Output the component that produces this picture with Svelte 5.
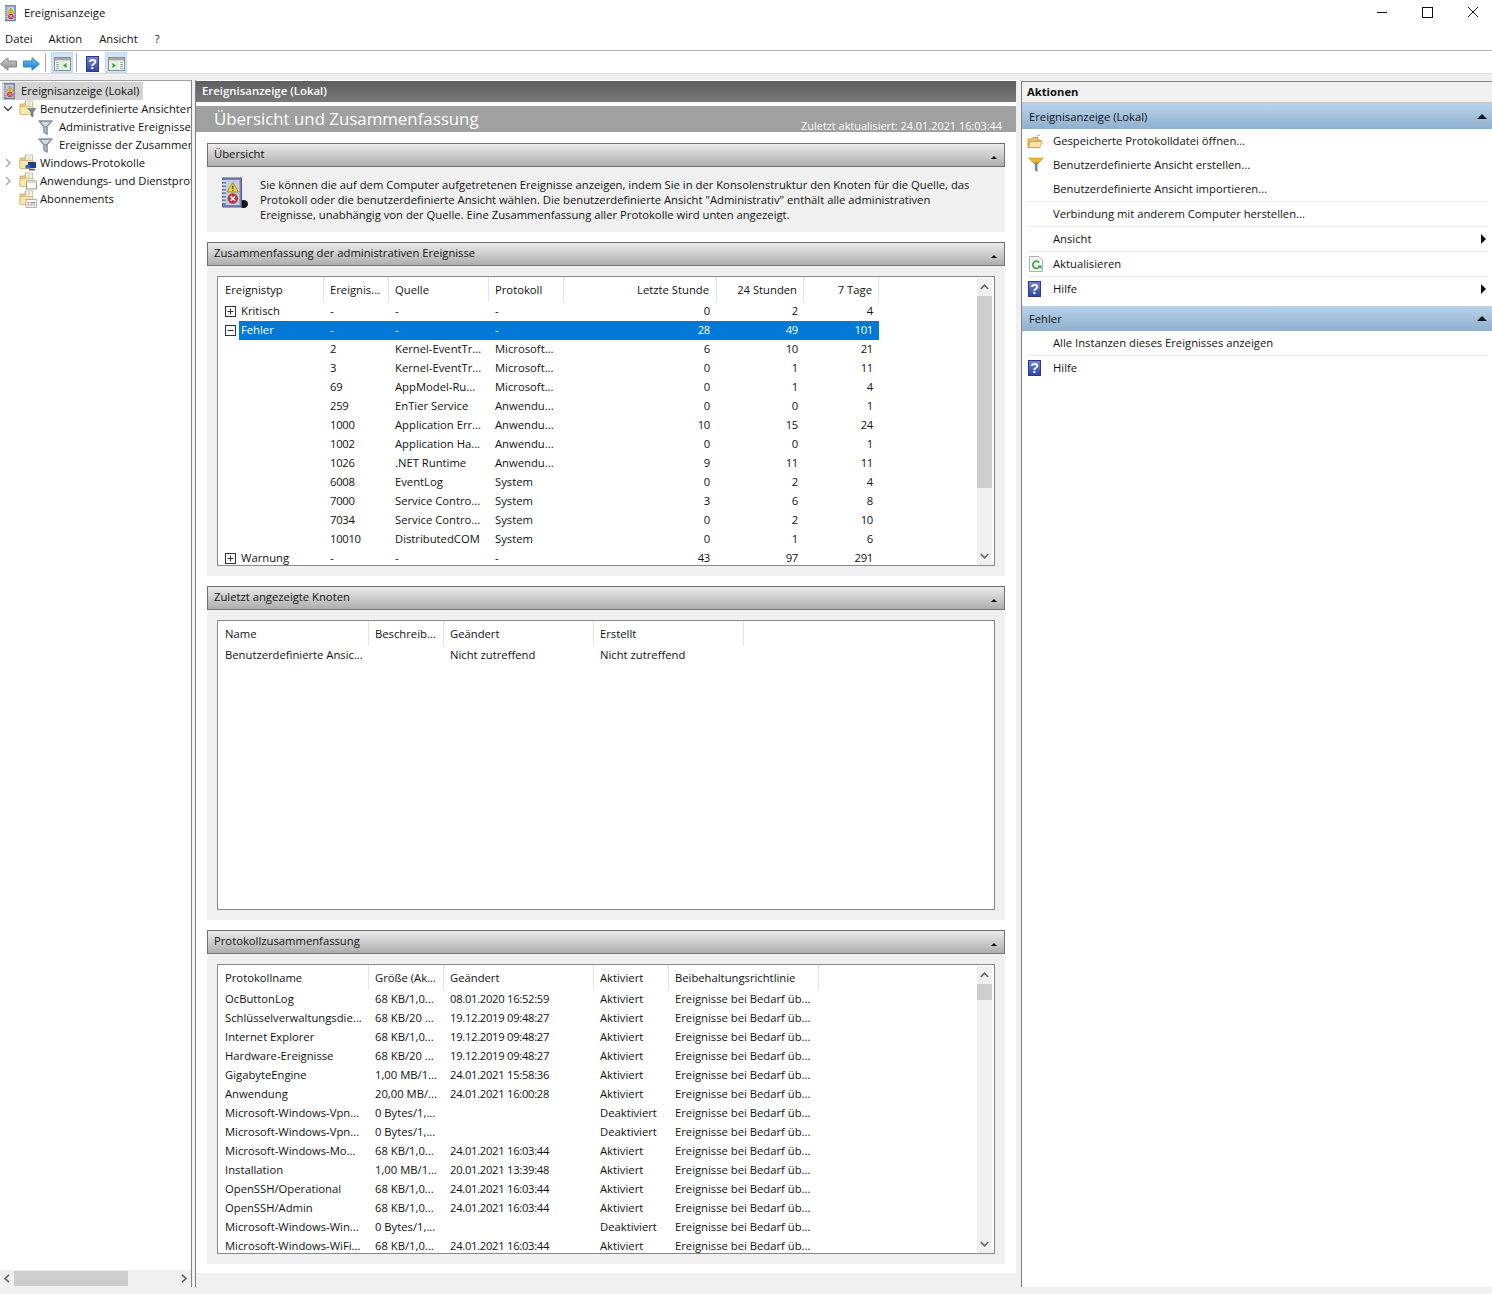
<script>
  const col1 = [
    { w: 106, t: 'Ereignistyp' }, { w: 65, t: 'Ereignis...' }, { w: 100, t: 'Quelle' }, { w: 75, t: 'Protokoll' },
    { w: 153, t: 'Letzte Stunde', r: 7 }, { w: 87, t: '24 Stunden', r: 6 }, { w: 75, t: '7 Tage', r: 6 }
  ];
  const rows1 = [
    { tog: '+', c: ['Kritisch', '-', '-', '-', '0', '2', '4'] },
    { tog: '-', sel: true, c: ['Fehler', '-', '-', '-', '28', '49', '101'] },
    { c: ['', '2', 'Kernel-EventTr...', 'Microsoft...', '6', '10', '21'] },
    { c: ['', '3', 'Kernel-EventTr...', 'Microsoft...', '0', '1', '11'] },
    { c: ['', '69', 'AppModel-Ru...', 'Microsoft...', '0', '1', '4'] },
    { c: ['', '259', 'EnTier Service', 'Anwendu...', '0', '0', '1'] },
    { c: ['', '1000', 'Application Err...', 'Anwendu...', '10', '15', '24'] },
    { c: ['', '1002', 'Application Ha...', 'Anwendu...', '0', '0', '1'] },
    { c: ['', '1026', '.NET Runtime', 'Anwendu...', '9', '11', '11'] },
    { c: ['', '6008', 'EventLog', 'System', '0', '2', '4'] },
    { c: ['', '7000', 'Service Contro...', 'System', '3', '6', '8'] },
    { c: ['', '7034', 'Service Contro...', 'System', '0', '2', '10'] },
    { c: ['', '10010', 'DistributedCOM', 'System', '0', '1', '6'] },
    { tog: '+', c: ['Warnung', '-', '-', '-', '43', '97', '291'] }
  ];
  const col2 = [{ w: 151, t: 'Name' }, { w: 75, t: 'Beschreib...' }, { w: 150, t: 'Geändert' }, { w: 150, t: 'Erstellt' }];
  const rows2 = [{ c: ['Benutzerdefinierte Ansic...', '', 'Nicht zutreffend', 'Nicht zutreffend'] }];
  const col3 = [{ w: 151, t: 'Protokollname' }, { w: 75, t: 'Größe (Ak...' }, { w: 150, t: 'Geändert' }, { w: 75, t: 'Aktiviert' }, { w: 150, t: 'Beibehaltungsrichtlinie' }];
  const pol = 'Ereignisse bei Bedarf üb...';
  const rows3 = [
    ['OcButtonLog', '68 KB/1,0...', '08.01.2020 16:52:59', 'Aktiviert'],
    ['Schlüsselverwaltungsdie...', '68 KB/20 ...', '19.12.2019 09:48:27', 'Aktiviert'],
    ['Internet Explorer', '68 KB/1,0...', '19.12.2019 09:48:27', 'Aktiviert'],
    ['Hardware-Ereignisse', '68 KB/20 ...', '19.12.2019 09:48:27', 'Aktiviert'],
    ['GigabyteEngine', '1,00 MB/1...', '24.01.2021 15:58:36', 'Aktiviert'],
    ['Anwendung', '20,00 MB/...', '24.01.2021 16:00:28', 'Aktiviert'],
    ['Microsoft-Windows-Vpn...', '0 Bytes/1,...', '', 'Deaktiviert'],
    ['Microsoft-Windows-Vpn...', '0 Bytes/1,...', '', 'Deaktiviert'],
    ['Microsoft-Windows-Mo...', '68 KB/1,0...', '24.01.2021 16:03:44', 'Aktiviert'],
    ['Installation', '1,00 MB/1...', '20.01.2021 13:39:48', 'Aktiviert'],
    ['OpenSSH/Operational', '68 KB/1,0...', '24.01.2021 16:03:44', 'Aktiviert'],
    ['OpenSSH/Admin', '68 KB/1,0...', '24.01.2021 16:03:44', 'Aktiviert'],
    ['Microsoft-Windows-Win...', '0 Bytes/1,...', '', 'Deaktiviert'],
    ['Microsoft-Windows-WiFi...', '68 KB/1,0...', '24.01.2021 16:03:44', 'Aktiviert']
  ].map((c) => ({ c: [...c, pol] }));
  const isNum = (v) => /^[\d.]+( [\d:]+)?$/.test(v);
</script>

{#snippet book(w, h, blob)}
  <svg width={w} height={h} viewBox="0 0 28 32">
    {#if blob}<ellipse cx="23.5" cy="27" rx="4.5" ry="4" fill="#111" />{/if}
    <rect x="2.5" y="1" width="19" height="29" fill="#7488b4" stroke="#4c5e86" />
    <rect x="6" y="3" width="13.5" height="25" fill="#c2cee3" />
    <path d="M1 4h5M1 7.5h5M1 11h5M1 14.5h5M1 18h5M1 21.5h5M1 25h5" stroke="#e8ecf2" stroke-width="1.3" />
    <path d="M12.8 5.5 L18.5 15 H7 Z" fill="#f4cf3a" stroke="#a88a18" />
    <path d="M12.8 8.5v3.5M12.8 12.8v1.2" stroke="#5a4a10" stroke-width="1.2" />
    <circle cx="12.8" cy="21.5" r="5.2" fill="#c8303c" />
    <path d="M10.5 19.2 l4.6 4.6 m0 -4.6 l-4.6 4.6" stroke="#fff" stroke-width="1.6" />
  </svg>
{/snippet}

{#snippet folder(kind)}
  <svg width="18" height="18" viewBox="0 0 18 18">
    <path d="M1 4 H5 L6.5 2 H8 V14 H1 Z" fill="#e9c97c" stroke="#c6a45c" stroke-width=".7" />
    <rect x="6.5" y="1" width="7" height="7" fill="#fdfbf2" stroke="#b8a880" stroke-width=".7" />
    <path d="M8 3h4M8 5h4" stroke="#c8b890" stroke-width=".7" />
    <path d="M1 6.5 H14 V14.5 H1 Z" fill="#fae7ac" stroke="#d0b066" stroke-width=".7" />
    {#if kind === 'filter'}
      <path d="M8.5 8.5 H17 L14 12 V17 L12 15.8 V12 Z" fill="#74899b" stroke="#4e5f6e" stroke-width=".5" />
    {:else if kind === 'win'}
      <rect x="9" y="8" width="8" height="6" fill="#1c3f94" />
      <rect x="6.5" y="11" width="5" height="3.5" fill="#2c62c8" />
      <rect x="10" y="15" width="6" height="1.4" fill="#555" />
    {:else if kind === 'app'}
      <rect x="7.5" y="9" width="10" height="8" fill="#f8f8f4" stroke="#80808a" stroke-width=".8" />
      <rect x="7.5" y="9" width="10" height="2" fill="#d8d8d0" />
    {:else}
      <rect x="7" y="9.5" width="10.5" height="8" fill="#fff" stroke="#8a94a8" stroke-width=".7" />
      <path d="M8.5 15h2M11.5 15h2M14.5 15h1.5M8.5 12.8h2" stroke="#c04040" stroke-width="1" />
      <path d="M11.5 12.8h4.5" stroke="#4060b0" stroke-width="1" />
    {/if}
  </svg>
{/snippet}

{#snippet funnel()}
  <svg width="15" height="15" viewBox="0 0 15 15">
    <path d="M.5 .8 H14.5 L9.3 6.8 V14.5 L5.7 12.3 V6.8 Z" fill="#8b9cab" stroke="#66798a" stroke-width=".7" />
    <path d="M3 2 H12 L8.5 6 H6.5 Z" fill="#d5dee6" />
    <path d="M6.7 7.5 V12 L8.2 13 V7.5 Z" fill="#b9c6d0" />
  </svg>
{/snippet}

{#snippet help()}
  <svg width="13" height="16" viewBox="0 0 13 16">
    <defs><linearGradient id="hb" x1="0" y1="0" x2="0" y2="1"><stop offset="0" stop-color="#7286d4" /><stop offset="1" stop-color="#2c46a4" /></linearGradient></defs>
    <rect x=".5" y=".5" width="12" height="15" fill="url(#hb)" stroke="#2a3a82" />
    <text x="6.5" y="13.2" text-anchor="middle" class="q">?</text>
  </svg>
{/snippet}

{#snippet paneicon(side)}
  <svg width="17" height="14" viewBox="0 0 17 14">
    <rect x=".5" y=".5" width="16" height="13" fill="#fbfbfb" stroke="#8c8c8c" />
    <rect x="1" y="1" width="15" height="2.5" fill="#a8a8a8" />
    {#if side === 'l'}
      <path d="M2 5.5h3M2 7.5h3M2 9.5h3M2 11.5h3" stroke="#8aa" />
      <rect x="6" y="4" width="9.5" height="9" fill="#e2f1e2" />
      <path d="M12.5 6 L9 8.5 L12.5 11 Z" fill="#2f9e44" />
    {:else}
      <rect x="1.5" y="4" width="9.5" height="9" fill="#e2f1e2" />
      <path d="M4.5 6 L8 8.5 L4.5 11 Z" fill="#2f9e44" />
      <path d="M12 5.5h3M12 7.5h3M12 9.5h3M12 11.5h3" stroke="#8aa" />
    {/if}
  </svg>
{/snippet}

{#snippet chevron(up)}
  <svg width="9" height="6" viewBox="0 0 9 6"><path d={up ? 'M.8 5 L4.5 1.2 L8.2 5' : 'M.8 1 L4.5 4.8 L8.2 1'} fill="none" stroke="#606060" stroke-width="1.6" /></svg>
{/snippet}

{#snippet sechead(title)}
  <div class="sechead"><span>{title}</span><i class="tri"></i></div>
{/snippet}

{#snippet listview(cols, rows, thumb, thumbH)}
  <div class="list">
    <div class="table">
      <div class="thead">
        {#each cols as c}
          <div class="th" class:r={c.r} style="width:{c.w}px;padding-right:{c.r ?? 5}px">{c.t}</div>
        {/each}
      </div>
      {#each rows as row}
        <div class="tr">
          {#each row.c as v, i}
            <div class="td" class:r={cols[i].r} class:num={isNum(v)} class:sel={row.sel} class:first={i === 0 && row.tog} style="width:{cols[i].w}px;padding-right:{cols[i].r ?? 5}px">
              {#if i === 0 && row.tog}
                <span class="tog">
                  <svg width="11" height="11" viewBox="0 0 11 11"><rect x=".5" y=".5" width="10" height="10" fill="#fff" stroke="#333" /><path d={row.tog === '+' ? 'M2.5 5.5h6M5.5 2.5v6' : 'M2.5 5.5h6'} stroke="#333" /></svg>
                </span>
                <span class="lab">{v}</span>
              {:else}
                {v}
              {/if}
            </div>
          {/each}
        </div>
      {/each}
    </div>
    {#if thumb}
      <div class="vbar">
        <div class="arrow">{@render chevron(true)}</div>
        <div class="track"><div class="thumb" style="height:{thumbH}px"></div></div>
        <div class="arrow">{@render chevron(false)}</div>
      </div>
    {/if}
  </div>
{/snippet}

<div class="app">
  <header class="title">
    <span class="appicon">{@render book(15, 17, false)}</span>
    <span class="tname">Ereignisanzeige</span>
    <div class="winbtns">
      <svg width="12" height="12" viewBox="0 0 12 12"><path d="M0 5.5h10" stroke="#111" /></svg>
      <svg width="12" height="12" viewBox="0 0 12 12"><rect x=".5" y=".5" width="10" height="10" fill="none" stroke="#111" /></svg>
      <svg width="12" height="12" viewBox="0 0 12 12"><path d="M1 0l10 10M11 0L1 10" stroke="#111" /></svg>
    </div>
  </header>
  <nav class="menu"><span>Datei</span><span>Aktion</span><span>Ansicht</span><span>?</span></nav>
  <div class="toolbar">
    <svg class="arr" width="17" height="14" viewBox="0 0 17 14">
      <defs><linearGradient id="ga" x1="0" y1="0" x2="0" y2="1"><stop offset="0" stop-color="#cfcfcf" /><stop offset="1" stop-color="#8c8c8c" /></linearGradient></defs>
      <path d="M.5 7 L8 .8 V4 H16.5 V10 H8 V13.2 Z" fill="url(#ga)" stroke="#8a8a8a" />
    </svg>
    <svg class="arr2" width="17" height="14" viewBox="0 0 17 14">
      <defs><linearGradient id="gb" x1="0" y1="0" x2="0" y2="1"><stop offset="0" stop-color="#6cc0f0" /><stop offset="1" stop-color="#1c7ccb" /></linearGradient></defs>
      <path d="M16.5 7 L9 .8 V4 H.5 V10 H9 V13.2 Z" fill="url(#gb)" stroke="#2a88cc" />
    </svg>
    <i class="sep"></i>
    <span class="tb on">{@render paneicon('l')}</span>
    <i class="sep s2"></i>
    <span class="tb">{@render help()}</span>
    <span class="tb on t3">{@render paneicon('r')}</span>
  </div>

  <main class="main">
    <aside class="tree">
      <div class="treelist">
        <div class="node n0"><span class="selbg"><span class="ico">{@render book(15, 17, false)}</span><span>Ereignisanzeige (Lokal)</span></span></div>
        <div class="node n1"><svg class="exp" width="10" height="8" viewBox="0 0 10 8"><path d="M1 1.5 L5 5.5 L9 1.5" fill="none" stroke="#444" stroke-width="1.4" /></svg><span class="ico">{@render folder('filter')}</span><span>Benutzerdefinierte Ansichten</span></div>
        <div class="node n2"><span class="ico">{@render funnel()}</span><span>Administrative Ereignisse</span></div>
        <div class="node n2"><span class="ico">{@render funnel()}</span><span>Ereignisse der Zusammenfassung</span></div>
        <div class="node n1"><svg class="exp" width="10" height="10" viewBox="0 0 10 10"><path d="M3 1 L7 5 L3 9" fill="none" stroke="#a6a6a6" stroke-width="1.4" /></svg><span class="ico">{@render folder('win')}</span><span>Windows-Protokolle</span></div>
        <div class="node n1"><svg class="exp" width="10" height="10" viewBox="0 0 10 10"><path d="M3 1 L7 5 L3 9" fill="none" stroke="#a6a6a6" stroke-width="1.4" /></svg><span class="ico">{@render folder('app')}</span><span>Anwendungs- und Dienstprotokolle</span></div>
        <div class="node n1 noexp"><span class="ico">{@render folder('sub')}</span><span>Abonnements</span></div>
      </div>
      <div class="hbar">
        <svg width="8" height="9" viewBox="0 0 8 9"><path d="M6 .8 L2 4.5 L6 8.2" fill="none" stroke="#606060" stroke-width="1.6" /></svg>
        <div class="htrack"><div class="hthumb"></div></div>
        <svg width="8" height="9" viewBox="0 0 8 9"><path d="M2 .8 L6 4.5 L2 8.2" fill="none" stroke="#606060" stroke-width="1.6" /></svg>
      </div>
    </aside>

    <section class="center">
      <div class="chead"><span>Ereignisanzeige (Lokal)</span></div>
      <div class="band"><span class="bandt">Übersicht und Zusammenfassung</span><span class="bands">Zuletzt aktualisiert: 24.01.2021 16:03:44</span></div>
      <div class="scroll">
        <div class="sec">
          {@render sechead('Übersicht')}
          <div class="overview">
            <span class="ovicon">{@render book(28, 32, true)}</span>
            <p>
              <span>Sie können die auf dem Computer aufgetretenen Ereignisse anzeigen, indem Sie in der Konsolenstruktur den Knoten für die Quelle, das</span>
              <span>Protokoll oder die benutzerdefinierte Ansicht wählen. Die benutzerdefinierte Ansicht "Administrativ" enthält alle administrativen</span>
              <span>Ereignisse, unabhängig von der Quelle. Eine Zusammenfassung aller Protokolle wird unten angezeigt.</span>
            </p>
          </div>
        </div>
        <div class="sec">
          {@render sechead('Zusammenfassung der administrativen Ereignisse')}
          <div class="secbody">{@render listview(col1, rows1, true, 192)}</div>
        </div>
        <div class="sec">
          {@render sechead('Zuletzt angezeigte Knoten')}
          <div class="secbody">{@render listview(col2, rows2, false, 0)}</div>
        </div>
        <div class="sec">
          {@render sechead('Protokollzusammenfassung')}
          <div class="secbody">{@render listview(col3, rows3, true, 16)}</div>
        </div>
      </div>
      <div class="cfoot"></div>
    </section>

    <aside class="actions">
      <div class="ahead">Aktionen</div>
      <div class="agroup"><span>Ereignisanzeige (Lokal)</span><i class="atri"></i></div>
      <div class="item plain"><span class="aicon">
        <svg width="16" height="15" viewBox="0 0 16 15"><path d="M10 2 l3 -1" stroke="#9ab" /><path d="M1 13.5 V5 H5 L6 3.5 H11 V6.5 H14 L12.5 13.5 Z" fill="#e6c06a" stroke="#b9923c" stroke-width=".8" /><path d="M1.2 13.5 L3.5 7.5 H15.3 L12.8 13.5 Z" fill="#f8e3a0" stroke="#b9923c" stroke-width=".6" /></svg>
      </span>Gespeicherte Protokolldatei öffnen...</div>
      <div class="item plain"><span class="aicon">
        <svg class="mv" width="16" height="16" viewBox="0 0 16 16"><path d="M.5 1 H15.5 L9.5 7.5 V15 L7 13.5 V7.5 Z" fill="#6f8d9c" /><path d="M.5 1 H15.5 L11 5.5 H5 Z" fill="#f0b428" stroke="#c98a10" stroke-width=".5" /></svg>
      </span>Benutzerdefinierte Ansicht erstellen...</div>
      <div class="item"><span class="aicon"></span>Benutzerdefinierte Ansicht importieren...</div>
      <div class="item"><span class="aicon"></span>Verbindung mit anderem Computer herstellen...</div>
      <div class="item"><span class="aicon"></span>Ansicht<i class="rtri"></i></div>
      <div class="item"><span class="aicon">
        <svg class="mv2" width="14" height="16" viewBox="0 0 14 16"><path d="M.5 .5 H10 L13.5 4 V15.5 H.5 Z" fill="#f6f6f6" stroke="#b0b0b0" /><path d="M10.2 6.6 A3.6 3.6 0 1 0 10.6 10.4" fill="none" stroke="#3fae4a" stroke-width="1.8" /><path d="M8.5 9.5 H12.5 V13 Z" fill="#2f9e44" /></svg>
      </span>Aktualisieren</div>
      <div class="item plain"><span class="aicon mv">{@render help()}</span>Hilfe<i class="rtri"></i></div>
      <div class="agroup g2"><span>Fehler</span><i class="atri"></i></div>
      <div class="item"><span class="aicon"></span>Alle Instanzen dieses Ereignisses anzeigen</div>
      <div class="item plain"><span class="aicon mv">{@render help()}</span>Hilfe</div>
    </aside>
  </main>
</div>

<style>
  :global(body) { margin: 0; background: #f0f0f0; }
  .app {
    width: 1492px; height: 1294px; overflow: hidden; display: flex; flex-direction: column;
    font: 11.25px/16px "Open Sans", "Noto Sans", sans-serif; color: #111; background: #f0f0f0;
  }
  svg { display: block; flex: none; }
  .q { font: bold 14px "Liberation Sans", sans-serif; fill: #fff; }

  .title { height: 26px; background: #fff; display: flex; align-items: center; padding-left: 4px; }
  .appicon { width: 20px; flex: none; }
  .tname { flex: 1; }
  .winbtns { display: flex; gap: 33px; padding-right: 13px; }
  .menu { height: 23px; padding-top: 1px; background: #fff; display: flex; padding-left: 5px; gap: 16px; align-items: center; border-bottom: 1px solid #b4b4b4; box-sizing: content-box; }
  .menu span:nth-child(3), .menu span:nth-child(4) { margin-left: 1px; }
  .toolbar { height: 22px; background: #fff; display: flex; align-items: flex-start; padding-top: 0; border-bottom: 1px solid #dcdcdc; }
  .arr { margin-left: 0; margin-top: 6px; }
  .arr2 { margin-left: 6px; margin-top: 6px; }
  .sep { width: 1px; height: 19px; background: #a8a8a8; margin: 2px 5px 0; flex: none; }
  .s2 { margin: 2px 4px 0 3px; }
  .tb { width: 22px; height: 21px; margin-top: 1px; display: flex; align-items: center; justify-content: center; flex: none; box-sizing: border-box; padding-top: 2px; }
  .tb.on { background: #cfe4f7; border: 1px solid #bedcf4; }
  .t3 { margin-left: 2px; }

  .main { flex: 1; display: flex; margin-top: 6px; min-height: 0; margin-bottom: 7px; }
  .tree { width: 191px; flex: none; background: #fff; border-top: 1px solid #a0a0a0; border-right: 1px solid #808080; display: flex; flex-direction: column; }
  .treelist { flex: 1; padding-top: 1px; overflow: hidden; }
  .node { height: 18px; display: flex; align-items: center; white-space: nowrap; overflow: hidden; }
  .ico { flex: none; display: block; }
  .n0 { padding-left: 2px; }
  .selbg { display: flex; align-items: center; height: 18px; background: #d4d4d4; padding-right: 4px; flex: none; }
  .n0 .ico { width: 19px; padding-left: 1px; box-sizing: border-box; }
  .n1 { padding-left: 3px; }
  .n1 .exp { width: 10px; margin-right: 6px; }
  .n1 .ico { width: 21px; }
  .noexp { padding-left: 19px; }
  .n2 { padding-left: 38px; }
  .n2 .ico { width: 21px; }
  .hbar { height: 17px; background: #f0f0f0; display: flex; align-items: center; padding: 0 3px; gap: 3px; }
  .htrack { flex: 1; height: 15px; }
  .hthumb { width: 114px; height: 15px; background: #cdcdcd; }

  .center { width: 820px; margin-left: 3px; flex: none; background: #fff; border-left: 1px solid #808080; display: flex; flex-direction: column; padding-top: 1px; }
  .chead { height: 21px; background: linear-gradient(#5e5e5e, #7a7a7a); color: #fff; font-weight: 600; font-size: 11.4px; padding: 0 0 2px 6px; box-sizing: border-box; display: flex; align-items: center; flex: none; }
  .band { height: 26px; margin-top: 4px; background: #a0a0a0; color: #fff; display: flex; justify-content: space-between; align-items: flex-end; padding: 0 14px 0 18px; flex: none; }
  .bandt { font-size: 16.85px; line-height: 26px; }
  .bands { font-size: 10.9px; line-height: 14px; margin-bottom: -1px; }
  .scroll { flex: 1; padding: 11px 11px 9px 11px; display: flex; flex-direction: column; gap: 10px; background: #fff; }
  .sechead { height: 22px; border: 1px solid #707070; background: linear-gradient(#ececec, #adadad); display: flex; align-items: center; justify-content: space-between; padding: 0 6px 2px; box-sizing: content-box; }
  .sechead { height: 20px; }
  .tri { width: 0; height: 0; border-left: 3px solid transparent; border-right: 3px solid transparent; border-bottom: 3px solid #111; margin-top: 6px; margin-right: 1px; }
  .overview { height: 65px; background: #f0f0f0; display: flex; padding-left: 13px; }
  .ovicon { width: 40px; margin-top: 10px; flex: none; }
  .overview p { margin: 10px 0 0; display: flex; flex-direction: column; line-height: 15px; white-space: nowrap; }
  .secbody { height: 310px; background: #f0f0f0; padding: 10px; box-sizing: border-box; }
  .list { height: 290px; box-sizing: border-box; border: 1px solid #8a8a8a; background: #fff; position: relative; overflow: hidden; }
  .table { display: flex; flex-direction: column; }
  .thead { display: flex; height: 25px; }
  .th { box-sizing: border-box; padding-left: 6px; border-right: 1px solid #e5e5e5; display: flex; align-items: center; white-space: nowrap; flex: none; }
  .th:first-child, .td:first-child { padding-left: 7px; }
  .th.r { justify-content: flex-end; }
  .tr { display: flex; height: 19px; flex: none; }
  .td { box-sizing: border-box; padding-left: 6px; white-space: nowrap; overflow: hidden; line-height: 18px; flex: none; display: flex; }
  .td.r { justify-content: flex-end; }
  .td.num { letter-spacing: -.3px; }
  .td.sel { background: #0078d7; color: #fff; }
  .td.sel.first { background: linear-gradient(to right, #fff 21px, #0078d7 21px); }
  .tog { width: 16px; display: flex; align-items: center; flex: none; }
  .vbar { position: absolute; top: 1px; right: 2px; bottom: 0; width: 15px; background: #f0f0f0; display: flex; flex-direction: column; }
  .arrow { height: 18px; display: flex; align-items: center; justify-content: center; flex: none; }
  .track { flex: 1; }
  .thumb { background: #cdcdcd; }

  .cfoot { height: 14px; background: #f0f0f0; flex: none; }

  .actions { flex: 1; margin: 1px 0 0 5px; border-left: 1px solid #808080; border-top: 1px solid #808080; background: #fff; display: flex; flex-direction: column; }
  .ahead { height: 20px; background: #f0f0f0; border-bottom: 2px solid #c8c8c8; font-weight: 700; padding-left: 5px; display: flex; align-items: center; flex: none; }
  .agroup { height: 25px; flex: none; background: linear-gradient(#b9d2ea, #8fb0d0); display: flex; align-items: center; justify-content: space-between; padding: 0 5px 0 7px; }
  .g2 { margin-top: 5px; }
  .atri { width: 0; height: 0; border-left: 5px solid transparent; border-right: 5px solid transparent; border-bottom: 5px solid #111; }
  .item { height: 24px; display: flex; align-items: center; margin: 0 4px 0 5px; border-bottom: 1px solid #ececec; flex: none; position: relative; }
  .item.plain { border-bottom: none; }
  .aicon { width: 26px; display: flex; flex: none; }
  .mv { margin-left: 1px; }
  .aicon.mv { margin-left: 0; padding-left: 1px; box-sizing: border-box; }
  .mv2 { margin-left: 2px; }
  .rtri { position: absolute; right: 2px; top: 7px; width: 0; height: 0; border-top: 5px solid transparent; border-bottom: 5px solid transparent; border-left: 5px solid #111; }
</style>
